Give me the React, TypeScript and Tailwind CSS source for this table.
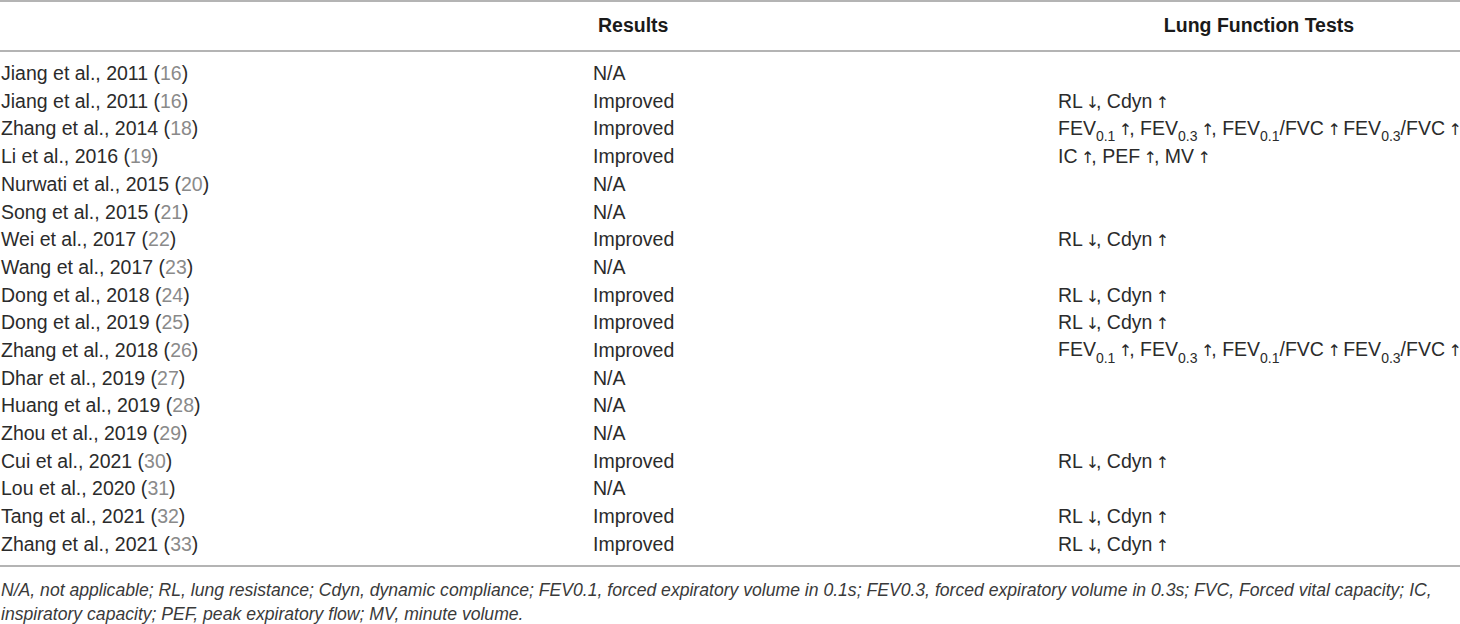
const arrow = "font-['DejaVu_Sans',sans-serif] text-[16px] -ml-[2px] tracking-[-3px] text-[#2b2b2b]";
const Up = () => <span className={arrow}>↑</span>;
const Down = () => <span className={arrow}>↓</span>;

const Sub = ({ children }: { children: React.ReactNode }) => (
  <sub className="text-[14px] align-[-3px] leading-none">{children}</sub>
);

function Rl() {
  return (
    <>
      RL <Down />, Cdyn <Up />
    </>
  );
}

function FevRow() {
  return (
    <>
      FEV<Sub>0.1</Sub> <Up />, FEV<Sub>0.3</Sub> <Up />, FEV<Sub>0.1</Sub>/FVC <Up /> FEV<Sub>0.3</Sub>/FVC <Up />
    </>
  );
}

const rows: [string, string, string, React.ReactNode][] = [
  ['Jiang et al., 2011', '16', 'N/A', null],
  ['Jiang et al., 2011', '16', 'Improved', <Rl />],
  ['Zhang et al., 2014', '18', 'Improved', <FevRow />],
  ['Li et al., 2016', '19', 'Improved', <>IC <Up />, PEF <Up />, MV <Up /></>],
  ['Nurwati et al., 2015', '20', 'N/A', null],
  ['Song et al., 2015', '21', 'N/A', null],
  ['Wei et al., 2017', '22', 'Improved', <Rl />],
  ['Wang et al., 2017', '23', 'N/A', null],
  ['Dong et al., 2018', '24', 'Improved', <Rl />],
  ['Dong et al., 2019', '25', 'Improved', <Rl />],
  ['Zhang et al., 2018', '26', 'Improved', <FevRow />],
  ['Dhar et al., 2019', '27', 'N/A', null],
  ['Huang et al., 2019', '28', 'N/A', null],
  ['Zhou et al., 2019', '29', 'N/A', null],
  ['Cui et al., 2021', '30', 'Improved', <Rl />],
  ['Lou et al., 2020', '31', 'N/A', null],
  ['Tang et al., 2021', '32', 'Improved', <Rl />],
  ['Zhang et al., 2021', '33', 'Improved', <Rl />],
];

export default function App() {
  return (
    <div className="w-[1460px] h-[624px] bg-white overflow-hidden text-[#2b2b2b] font-['Liberation_Sans',Arial,sans-serif] text-[19.5px]">
      {/* Header */}
      <div className="grid grid-cols-[593px_465px_1fr] h-[52px] items-center border-t-2 border-b-2 border-[#b4b4b4]">
        <div />
        <div className="pl-[5px] font-bold text-[#1a1a1a]">Results</div>
        <div className="text-center font-bold text-[#1a1a1a]">Lung Function Tests</div>
      </div>

      {/* Body */}
      <div className="pt-[8px] pb-[7px] border-b-2 border-[#b4b4b4]">
        {rows.map(([study, ref, result, tests], i) => (
          <div key={i} className="grid grid-cols-[593px_465px_1fr] h-[27.7px] items-center leading-none whitespace-nowrap">
            <div className="pl-px">
              {study} (<span className="text-[#8a8a8a]">{ref}</span>)
            </div>
            <div>{result}</div>
            <div>{tests}</div>
          </div>
        ))}
      </div>

      {/* Footnote */}
      <p className="pt-[11px] italic text-[17.6px] leading-[24px] text-[#3a3a3a] pl-px">
        N/A, not applicable; RL, lung resistance; Cdyn, dynamic compliance; FEV0.1, forced expiratory volume in 0.1s; FEV0.3, forced expiratory volume in 0.3s; FVC, Forced vital capacity; IC, inspiratory capacity; PEF, peak expiratory flow; MV, minute volume.
      </p>
    </div>
  );
}
